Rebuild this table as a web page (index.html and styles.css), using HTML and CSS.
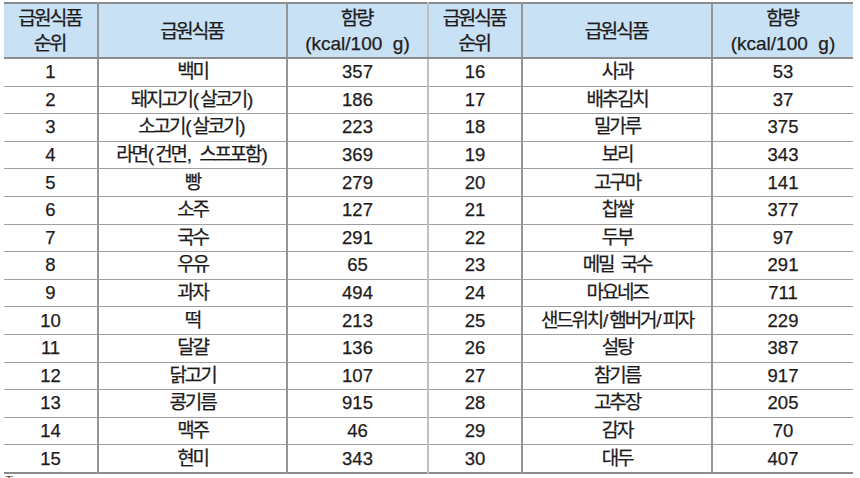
FILE: index.html
```html
<!DOCTYPE html>
<html lang="ko">
<head>
<meta charset="utf-8">
<link rel="stylesheet" href="styles.css">
</head>
<body>
<table class="tbl">
  <colgroup>
    <col class="c-rank"><col class="c-food"><col class="c-kcal">
    <col class="c-rank"><col class="c-food2"><col class="c-kcal">
  </colgroup>
  <thead>
    <tr>
      <th><span class="ko">급원식품</span><br><span class="ko">순위</span></th>
      <th><span class="ko">급원식품</span></th>
      <th><span class="ko">함량</span><br>(kcal/100&nbsp; g)</th>
      <th class="mid"><span class="ko">급원식품</span><br><span class="ko">순위</span></th>
      <th><span class="ko">급원식품</span></th>
      <th><span class="ko">함량</span><br>(kcal/100&nbsp; g)</th>
    </tr>
  </thead>
  <tbody>
    <tr><td>1</td><td class="food">백미</td><td>357</td><td class="mid">16</td><td class="food">사과</td><td>53</td></tr>
    <tr><td>2</td><td class="food">돼지고기<span class="p">(</span>살코기<span class="p">)</span></td><td>186</td><td class="mid">17</td><td class="food">배추김치</td><td>37</td></tr>
    <tr><td>3</td><td class="food">소고기<span class="p">(</span>살코기<span class="p">)</span></td><td>223</td><td class="mid">18</td><td class="food">밀가루</td><td>375</td></tr>
    <tr><td>4</td><td class="food">라면<span class="p">(</span>건면<span class="p">,&nbsp;</span>스프포함<span class="p">)</span></td><td>369</td><td class="mid">19</td><td class="food">보리</td><td>343</td></tr>
    <tr><td>5</td><td class="food">빵</td><td>279</td><td class="mid">20</td><td class="food">고구마</td><td>141</td></tr>
    <tr><td>6</td><td class="food">소주</td><td>127</td><td class="mid">21</td><td class="food">찹쌀</td><td>377</td></tr>
    <tr><td>7</td><td class="food">국수</td><td>291</td><td class="mid">22</td><td class="food">두부</td><td>97</td></tr>
    <tr><td>8</td><td class="food">우유</td><td>65</td><td class="mid">23</td><td class="food">메밀<span class="p">&nbsp;</span>국수</td><td>291</td></tr>
    <tr><td>9</td><td class="food">과자</td><td>494</td><td class="mid">24</td><td class="food">마요네즈</td><td>711</td></tr>
    <tr><td>10</td><td class="food">떡</td><td>213</td><td class="mid">25</td><td class="food">샌드위치<span class="p">/</span>햄버거<span class="p">/</span>피자</td><td>229</td></tr>
    <tr><td>11</td><td class="food">달걀</td><td>136</td><td class="mid">26</td><td class="food">설탕</td><td>387</td></tr>
    <tr><td>12</td><td class="food">닭고기</td><td>107</td><td class="mid">27</td><td class="food">참기름</td><td>917</td></tr>
    <tr><td>13</td><td class="food">콩기름</td><td>915</td><td class="mid">28</td><td class="food">고추장</td><td>205</td></tr>
    <tr><td>14</td><td class="food">맥주</td><td>46</td><td class="mid">29</td><td class="food">감자</td><td>70</td></tr>
    <tr><td>15</td><td class="food">현미</td><td>343</td><td class="mid">30</td><td class="food">대두</td><td>407</td></tr>
  </tbody>
</table>
<div class="note">주:</div>
</body>
</html>
```
FILE: styles.css
```css
html, body {
  margin: 0;
  padding: 0;
  background: #ffffff;
}
body {
  padding: 2px 0 0 4px;
  font-family: "Liberation Sans", "Noto Sans CJK KR", sans-serif;
  color: #1e1b1c;
}
.tbl {
  border-collapse: collapse;
  table-layout: fixed;
  width: 849px;
  font-size: 18.5px;
  -webkit-text-stroke: 0.25px #1e1b1c;
  border-top: 2px solid #8c8c8c;
  border-bottom: 2px solid #8c8c8c;
}
.c-rank { width: 94px; }
.c-food { width: 189px; }
.c-food2 { width: 190px; }
.c-kcal { width: 141px; }
.tbl th {
  background: #c8e1f4;
  font-weight: normal;
  font-size: 19px;
  height: 52px;
  padding: 1px 0 0;
  line-height: 25px;
  text-align: center;
  border-bottom: 2px solid #8c8c8c;
  border-left: 2px solid #959595;
}
.tbl td {
  height: 26.6px;
  padding: 0;
  line-height: 22px;
  text-align: center;
  border-bottom: 1px solid #9f9f9f;
  border-left: 2px solid #959595;
}
.tbl th:first-child, .tbl td:first-child {
  border-left: none;
}
.tbl th.mid, .tbl td.mid {
  border-left: 2px solid #c0c0c0;
}
.ko {
  font-size: 19.5px;
  letter-spacing: -2.3px;
  margin-right: 2px;
}
.tbl td.food {
  font-size: 19px;
  letter-spacing: -2.2px;
}
.tbl td.food .p {
  letter-spacing: 1px;
  margin-left: 1px;
}
.note {
  margin-top: 1px;
  font-size: 11px;
  color: #555;
  line-height: 12px;
}
```
